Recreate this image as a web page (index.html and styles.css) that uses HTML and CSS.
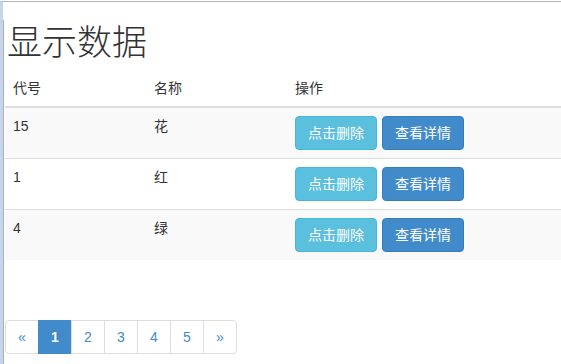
FILE: index.html
```html
<!DOCTYPE html>
<html lang="zh-CN">
<head>
    <meta charset="UTF-8">
    <title>显示数据</title>
    <link rel="stylesheet" href="styles.css">
</head>
<body>

<div class="window">
    <div class="page">
        <h1>显示数据</h1>

        <!-- data table -->
        <table class="data-table">
            <thead>
                <tr>
                    <th class="col-code">代号</th>
                    <th class="col-name">名称</th>
                    <th>操作</th>
                </tr>
            </thead>
            <tbody>
                <tr class="striped">
                    <td>15</td>
                    <td>花</td>
                    <td><button class="btn btn-info">点击删除</button> <button class="btn btn-primary">查看详情</button></td>
                </tr>
                <tr>
                    <td>1</td>
                    <td>红</td>
                    <td><button class="btn btn-info">点击删除</button> <button class="btn btn-primary">查看详情</button></td>
                </tr>
                <tr class="striped">
                    <td>4</td>
                    <td>绿</td>
                    <td><button class="btn btn-info">点击删除</button> <button class="btn btn-primary">查看详情</button></td>
                </tr>
            </tbody>
        </table>

        <!-- pager -->
        <ul class="pagination">
            <li><a href="#">&laquo;</a></li>
            <li class="active"><a href="#">1</a></li>
            <li><a href="#">2</a></li>
            <li><a href="#">3</a></li>
            <li><a href="#">4</a></li>
            <li><a href="#">5</a></li>
            <li><a href="#">&raquo;</a></li>
        </ul>
    </div>
</div>

</body>
</html>
```

FILE: styles.css
```css
/* page and window frame */
body {
    margin: 0;
    font-family: 'Liberation Sans', 'Noto Sans CJK SC', sans-serif;
    font-size: 14px;
    line-height: 20px;
    color: #333;
    background-color: #fff;
}

.window {
    margin-top: 1px;
    border-top: 1px solid #b4b4b4;
    border-left: 3px solid #c6d5e8;
    height: 362px;
    overflow: hidden;
}

.page {
    border-left: 1px solid #a8b0ba;
    height: 100%;
    padding-left: 1px;
}

h1 {
    font-family: 'Noto Sans CJK SC', sans-serif;
    font-size: 35px;
    font-weight: 300;
    line-height: 40px;
    margin: 18px 0 10px 2px;
    color: #333;
}

/* table */
.data-table {
    width: 100%;
    border-collapse: collapse;
    border-spacing: 0;
    margin-bottom: 60px;
}

.data-table th,
.data-table td {
    padding: 8px;
    text-align: left;
    vertical-align: top;
    font-weight: normal;
}

.data-table th {
    border-bottom: 2px solid #ddd;
    vertical-align: bottom;
}

.data-table td {
    border-top: 1px solid #ddd;
    height: 34px;
}

.data-table tbody tr:first-child td {
    border-top: 0;
}

.col-code {
    width: 125px;
}

.col-name {
    width: 125px;
}

.striped {
    background-color: #f9f9f9;
}

/* buttons */
.btn {
    display: inline-block;
    height: 34px;
    padding: 6px 12px;
    margin: 0 1px 0 0;
    font-family: inherit;
    font-size: 14px;
    line-height: 20px;
    color: #fff;
    border: 1px solid transparent;
    border-radius: 4px;
    vertical-align: top;
    cursor: pointer;
}

.btn-info {
    background-color: #5bc0de;
    border-color: #46b8da;
}

.btn-primary {
    background-color: #428bca;
    border-color: #357ebd;
}

/* pagination */
.pagination {
    display: flex;
    list-style: none;
    padding: 0;
    margin: 0;
}

.pagination a {
    display: block;
    width: 32px;
    height: 32px;
    line-height: 32px;
    text-align: center;
    color: #428bca;
    text-decoration: none;
    border: 1px solid #ddd;
    margin-left: -1px;
    background-color: #fff;
}

.pagination li:first-child a {
    margin-left: 0;
    border-radius: 4px 0 0 4px;
}

.pagination li:last-child a {
    border-radius: 0 4px 4px 0;
}

.pagination .active a {
    background-color: #428bca;
    border-color: #428bca;
    color: #fff;
    font-weight: bold;
}
```
